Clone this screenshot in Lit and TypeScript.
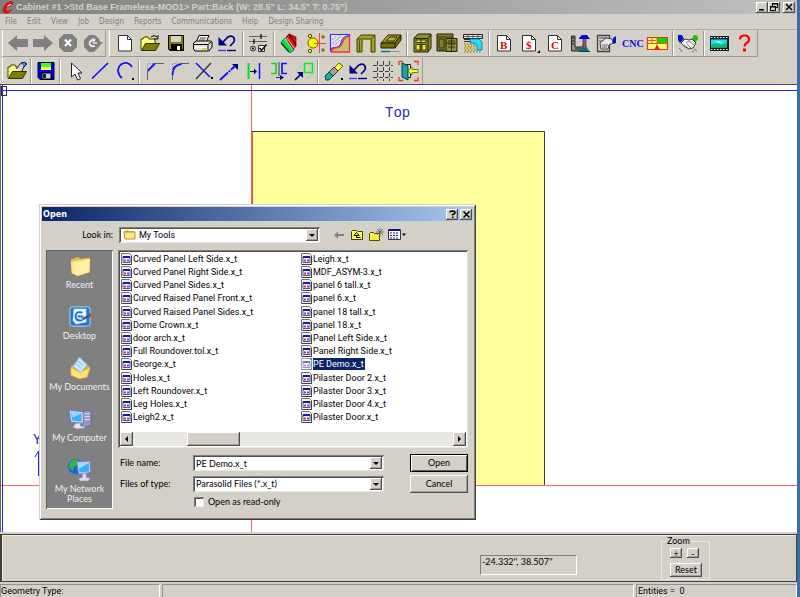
import { LitElement, html, css, svg, nothing } from "lit";
import { customElement, property } from "lit/decorators.js";
import { classMap } from "lit/directives/class-map.js";

const undo = svg`<path d="M6 13l7-7q4-2 6 1 1 3-1 5l-3 3" fill="none" stroke="#000080" stroke-width="1.700"/><path d="M3.500 6v8.500H12z" fill="#000080"/><path d="M3 19.500h8" stroke="#4040ff" stroke-width="1.400"/><path d="M12 19.500h9" stroke="#000080" stroke-width="1.400"/>`;

const openFolder = svg`<path d="M3 19V8h2l1-2h4l1 2h6v4" fill="#ffff80" stroke="#404000"/><path d="M3.500 19.500l4-7h14l-4 7z" fill="#808000" stroke="#303000"/>`;

const page = svg`<path d="M5.500 4.500h9l4 4v11.500h-13z" fill="#fff" stroke="#303030"/><path d="M14.500 4.500v4h4" fill="none" stroke="#303030"/>`;

const icons: Record<string, unknown> = {
  back: svg`<path d="M2 12l9-8v4h11v8H11v4z" fill="#808080"/>`,
  forward: svg`<path d="M22 12l-9-8v4H2v8h11v4z" fill="#808080"/>`,
  stop: svg`<path d="M8 3h8l5 5v8l-5 5H8l-5-5V8z" fill="#808080"/><path d="M9 8.500l6 6.500M15 8.500L9 15" stroke="#fff" stroke-width="2"/>`,
  refresh: svg`<path d="M8 4h6l4 4 1 3h3l-5 6-4 4H8l-5-5V9z" fill="#808080"/><path d="M14 15q-4 1-5.500-2 0-3.500 3.500-4" fill="none" stroke="#e8e8e8" stroke-width="1.800"/><path d="M11.500 6.500L15 9l-3.500 2.500z" fill="#e8e8e8"/><path d="M12 12h4" stroke="#e8e8e8" stroke-width="1.500"/>`,
  new: page,
  open: svg`${openFolder}<path d="M13 6q3-3 6 0M20 4v4h-4" fill="none" stroke="#000"/>`,
  save: svg`<path d="M4 4h16v16H6l-2-2z" fill="#000"/><path d="M5 5h2v6h10V5h2v13h-1v-5H7v5H5z" fill="#808000"/><path d="M7 5h10v6H7z" fill="#d4d0c8"/><path d="M13 15h3v4h-3z" fill="#fff"/>`,
  print: svg`<path d="M9 4.500h10l-3 7H6z" fill="#fff" stroke="#000"/><path d="M10 7h6M9 9h6" stroke="#404040"/><path d="M3.500 12l3-2h14l1.500 1v5l-3 4h-14l-1.500-2z" fill="#e4e2dc" stroke="#000"/><path d="M4 13.500h14l3-2.500M18 14v5" fill="none" stroke="#000"/><path d="M5 16.500h12" stroke="#fff"/><path d="M12 17h4v1.500h-4z" fill="#d0d000"/>`,
  undo,
  settings: svg`<path d="M3 5.500h18M3 10.500h18" stroke="#606060"/><path d="M15 3v5M8 8v5" stroke="#303030" stroke-width="1.600"/><circle cx="7" cy="17.500" r="2.500" fill="none" stroke="#303030"/><circle cx="7" cy="17.500" r="1"/><path d="M12.500 14.500h6v6h-6z" fill="#fff" stroke="#303030"/><path d="M13.500 17l2 2.500 5-6" fill="none" stroke="#000" stroke-width="1.400"/>`,
  books: svg`<path d="M4 11l4-4 9 12-4 3z" fill="#00e040" stroke="#007020" stroke-width=".7"/><path d="M9 6l3-3 7 3v9l-3 4z" fill="#e81010" stroke="#600" stroke-width=".7"/><path d="M8 8l8 11M10 7l7 10" stroke="#f4f4f4" stroke-width=".8"/><path d="M12 3l7 11" stroke="#600000" stroke-width="1.400"/><path d="M4 12l8 9" stroke="#104010" stroke-width="1.200"/>`,
  drill: svg`<path d="M17.500 2v20M6 12.500h18" stroke="#ff4040"/><circle cx="11" cy="12" r="5" fill="#ff0" stroke="#706000"/><path d="M12 12.500h4" stroke="#ff4040"/><g fill="#ff0" stroke="#504000"><circle cx="8" cy="5" r="1.700"/><circle cx="8" cy="20" r="1.700"/><circle cx="21" cy="6" r="1.200"/><circle cx="21" cy="19" r="1.200"/></g>`,
  profile: svg`<path d="M2.500 3.500h19v1q-7 1-8 6-1 6-7 6-4 0-4 4z" fill="#e4e4ea" stroke="#3030ff" stroke-width="1.200"/><path d="M4 9l4-4M4 13l9-8M6 15l6-6" stroke="#909090" stroke-width=".8"/><path d="M21.500 5q-6 2-7 7-2 5-7 5-4 1-4 4h18z" fill="#c8c070" stroke="#ff3030" stroke-width="1.300"/>`,
  door: svg`<path d="M3 8l4-4h14v17h-4V10H8v11H3z" fill="#a0a030" stroke="#404000"/><path d="M9.500 21V9h7v12" fill="#d4d0c8" stroke="#d8d860"/><path d="M3 8h14v13M5.500 9.500V21M17 8l4-4" fill="none" stroke="#404000" stroke-width=".8"/>`,
  panel: svg`<path d="M2 12l7-8h13l-6 8z" fill="#a0a030" stroke="#202000"/><path d="M7 10l4-4h7l-3 4z" fill="#b8b040" stroke="#303000"/><path d="M2 12h14l6-8v5l-6 8H2z" fill="#707010" stroke="#202000"/><path d="M16 12v5" stroke="#202000"/><path d="M2 20.500h9" stroke="#008080" stroke-width="1.500"/><path d="M11 20.500h10" stroke="#80a0a0"/>`,
  cabinet: svg`<path d="M4 7l4-4h13v14l-3 4H4z" fill="#909030" stroke="#202000"/><path d="M4.500 7.500h13.500v13M18 7.500l3-4" fill="none" stroke="#202000"/><path d="M6 9h10v2.500H6zM6 13.500h4V19H6zM12 13.500h4V19h-4z" fill="#e8e830" stroke="#404000"/><path d="M11 8v12" stroke="#303000"/>`,
  cabinets: svg`<path d="M2 3h16v17H2z" fill="#808030" stroke="#202000"/><path d="M2 6h16M4 8h5v9H4zM4 19h6" fill="none" stroke="#202000" stroke-width=".8"/><path d="M11 7.500h11v13H11z" fill="#909038" stroke="#202000"/><path d="M13 10h7M13 13h7M13 16h7M16.500 8v12M11 12h11" stroke="#303000"/>`,
  countertop: svg`<path d="M3 12h11v9H3z" fill="#d4d0a0"/><path d="M3 13h11M4 15h11M3 17h11M4 19h16M3 21h17" stroke="#807000" stroke-dasharray="1.500 1.500" stroke-width="1.200"/><path d="M2.500 3.500h19v4h-19z" fill="#e8e8e8" stroke="#202020"/><path d="M7 3v4M12 3v4M17 3v4M3 5.500h18" stroke="#404040" stroke-width=".8"/><path d="M9 8h9l3 3v8h-5v-5l-3-2H9z" fill="#20e0f4" stroke="#0070b0" stroke-width=".8"/><path d="M3 8.500h6M3 10.500h6" stroke="#303030"/>`,
  bill: svg`${page}<text x="8" y="17.500" class="mark">B</text>`,
  cost: svg`${page}<text x="9" y="17.500" class="mark">$</text><path d="M23 19v3h-3z"/>`,
  cut: svg`${page}<text x="8" y="17.500" class="mark">C</text>`,
  saw: svg`<path d="M3.500 5h3.500v11h6v4H3.500z" fill="#909090" stroke="#202020"/><path d="M4 7h2M4 10h2M4 13h2M7 18h5" stroke="#202020"/><path d="M11 20l5-9 5 9z" fill="#008080"/><path d="M15 7h3v11h-3z" fill="#a05060" stroke="#402020" stroke-width=".6"/><path d="M11 7l3-3h5l3 4H11z" fill="#0000e0"/><path d="M11 20.500h11" stroke="#004040"/>`,
  report: svg`<path d="M3.500 4.500h12v16h-12z" fill="#d0d0d0" stroke="#404040" stroke-width="1.300"/><path d="M5 7h8M5 10h4" stroke="#505050"/><path d="M6 12l6-5 6 1 1 4-4 2-1 4H7z" fill="#e8e8e8" stroke="#404040"/><path d="M8 14h6M8 16h5" stroke="#606060"/><path d="M19 7l3-2v7l-3 1z" fill="#0010d0"/>`,
  cnc: svg`<text x="2" y="16" class="cnc">CNC</text>`,
  nesting: svg`<path d="M2.500 6.500h20v12h-20z" fill="#ffff70" stroke="#f03010" stroke-width="1.200"/><path d="M12 7h10v5H12z" fill="#00e000"/><path d="M7 7v5M2 12.500h20M12 7v11M3 9.500h8" stroke="#f05030"/><path d="M12 14l3 4.500H9z" fill="#e02010"/>`,
  hands: svg`<path d="M2 4h4l2 4-4 4-2-3z" fill="#0010c0"/><path d="M22 4h-4l-2 4 3 4 3-4z" fill="#10c010"/><path d="M19 4l3-1v3z" fill="#e0d000"/><path d="M5 12l4-4 4 1 3-1 4 4-3 5-4 1-5-3z" fill="#f4f4f4" stroke="#404040"/><path d="M10 12l3-2 5 4M8 14l4 3M11 13l4 4" fill="none" stroke="#606060" stroke-width=".8"/><path d="M3 17l2 2M6 19l-1 2M18 18l3 2M16 20l2 1" stroke="#707070"/>`,
  film: svg`<path d="M3 5h19v15H3z" fill="#102020"/><path d="M4 6.500h17M4 18.500h17" stroke="#f0f0f0" stroke-dasharray="1.500 1.500"/><path d="M4 8.500h16v8H4z" fill="#10e8f8"/><path d="M4 14q4-3 7-1t9-2v5.500H4z" fill="#20b070"/><path d="M8 11l4-1 3 2z" fill="#fff"/>`,
  help: svg`<path d="M8 8.500q0-4 4.500-4t4.500 4q0 2.500-2.500 3.500-2 1-2 3.500" fill="none" stroke="#ff0000" stroke-width="2.200"/><path d="M11 17.500h3v3h-3z" fill="#f00"/>`,

  openPart: svg`${openFolder}<path d="M11 10l5-6 4 1-3 7" fill="#d0d0d0" stroke="#202020"/><path d="M16 4q4-2 6 1l-3 3" fill="#4080ff" stroke="#001050"/>`,
  savePart: svg`<path d="M4 3.500h16v17H6l-2-2z" fill="#0000e0" stroke="#000030"/><path d="M7 4h10v4H7z" fill="#40ff20"/><path d="M7 8h10v3H7z" fill="#ffff40"/><path d="M8 14h9v6H8z" fill="#d0d0d0" stroke="#000"/><path d="M9 15h3v4H9z" fill="#202020"/>`,
  select: svg`<path d="M8.500 4v14l3.500-3 2.500 6 3-1.200-2.500-5.800h4z" fill="#fff" stroke="#202020"/>`,
  line: svg`<path d="M4 19.500L20 4" stroke="#1010ff" stroke-width="1.700"/>`,
  arc: svg`<path d="M19 8q-3-5-8-4-6 2-6 8 1 5 4 7" fill="none" stroke="#1010ff" stroke-width="1.700"/><path d="M19 19h2v2h-2z"/>`,
  chamfer: svg`<path d="M5.500 21V12M12 4.500h10" stroke="#606060"/><path d="M5.500 12L13 4.500" stroke="#1010ff" stroke-width="1.800"/><path d="M5.500 12V4.500H12" fill="none" stroke="#909090" stroke-dasharray="1 1"/>`,
  fillet: svg`<path d="M5.500 21v-5M14 4.500h8" stroke="#606060"/><path d="M5.500 16q0-10 9-11" fill="none" stroke="#1010ff" stroke-width="1.800"/><path d="M5.500 12V4.500H12" fill="none" stroke="#909090" stroke-dasharray="1 1"/>`,
  trim: svg`<path d="M4 4l14 14" stroke="#1010ff" stroke-width="1.500"/><path d="M4 20L19 4" stroke="#303030" stroke-width="1.200"/><path d="M19 18h2v2h-2z"/>`,
  extend: svg`<path d="M3 21L19 6" stroke="#1010ff" stroke-width="1.800" stroke-dasharray="11 1 2 1"/><path d="M15 5h6v6z" fill="#000080"/>`,
  offset: svg`<path d="M6.500 4v16" stroke="#00e020" stroke-width="2"/><path d="M17.500 4v16" stroke="#1010ff" stroke-width="1.500"/><path d="M8 12.500h5" stroke="#000080"/><path d="M12 9.500l3 3-3 3z" fill="#000080"/>`,
  mirror: svg`<path d="M4 4.500h5v10H4" fill="none" stroke="#00e020" stroke-width="1.700"/><path d="M20 4.500h-5v10h5" fill="none" stroke="#1010ff" stroke-width="1.700"/><path d="M12 3v14M9 18.500h5" stroke="#303050"/><path d="M13 16l4 2.500-4 2.500z" fill="#000080"/>`,
  move: svg`<path d="M12.500 4.500h8v9h-8z" fill="none" stroke="#00f020" stroke-width="1.600"/><path d="M3 21l6-6" stroke="#000080" stroke-width="1.700"/><path d="M5 13h6v6z" fill="#000080"/><path d="M4 12l7-7M14 20l7-5" stroke="#a0a0a0" stroke-dasharray="1 1"/>`,
  erase: svg`<path d="M13 9l5-5 4 3-6 6z" fill="#ffff20" stroke="#606000"/><path d="M8 13l5-5 4 4-5 5z" fill="#a0a0a0" stroke="#303030"/><path d="M4 17l4-4 4 4-4 4H5z" fill="#10b0a0" stroke="#104040"/><path d="M20 19h2v2h-2z"/>`,
  undoEdit: undo,
  grid: svg`<path d="M2 6.500h20M2 12.500h20M2 18.500h20M6.500 2v20M12.500 2v20M18.500 2v20" stroke="#303030" stroke-width=".9" stroke-dasharray="4 2"/>`,
  exit: svg`<path d="M3 6V2.500h4M18 2.500h4V6M3 18v3.500h4M18 21.500h4V18" fill="none" stroke="#ff3030" stroke-width="1.300"/><path d="M9.500 5.500h5v13h-5z" fill="#f0f0f0" stroke="#202020"/><path d="M6 4l6 2.500V21l-6-3z" fill="#20a0a0" stroke="#004040"/><path d="M12 12l4-4v2.500h6v3h-6V16z" fill="#ffff20" stroke="#606000" stroke-width=".8"/>`,
};

const file = svg`<svg class="file-icon" viewBox="0 0 11 12" aria-hidden="true"><path d="M.5.5h8l2 2v9H.5z" fill="#f4f2ec" stroke="#707070"/><path d="M10.500 3v8.500H1" fill="none" stroke="#404040"/><path d="M2 3.500h7v6H2z" fill="#f4f4ff" stroke="#5050a0"/><path d="M2 3h7v2H2z" fill="#1818a0"/><path d="M3 6.500h2v2H3z" fill="#e03030"/><path d="M6 6.500h2v2H6z" fill="#3060ff"/></svg>`;

const places = [
  { name: "Recent", art: svg`<path d="M3 6l7-3 3 2 9-1 1 3v12l-13 4-6-3z" fill="#e8bc48"/><path d="M3 8l20-3-1 14-12 4-6-3z" fill="#ffe88c"/><path d="M6 10l16-3-1 11-12 4z" fill="#fff0a8"/>` },
  { name: "Desktop", art: svg`<rect x="2" y="2" width="21" height="20" rx="3" fill="#1c78d8" stroke="#b0d8ff"/><path d="M6 4h13v14l-11 2-3-4z" fill="#e8f6ff"/><path d="M15 8q-6-2-7 3-1 6 7 5M16 12h-6" fill="none" stroke="#1c70d0" stroke-width="2"/><path d="M14 14l9-5 1 2-8 5z" fill="#405880"/><path d="M22 8l2 1v4l-2-1z" fill="#c04020"/>` },
  { name: "My Documents", art: svg`<path d="M3 11l4-3 14 2 2 3-4 10-14-3z" fill="#e8b840"/><path d="M12 1l8 8-6 9-9-7z" fill="#c8e8ff" stroke="#70a8d0"/><path d="M8 8l6 5M10 5l6 5" stroke="#80b8e0"/><path d="M3 12l10 5 10-5-3 10-8 2-9-4z" fill="#ffe070" stroke="#d8a830" stroke-width=".6"/>` },
  { name: "My Computer", art: svg`<path d="M14 5l8-2 2 3v13l-6 2-4-3z" fill="#9898c8" stroke="#686898"/><path d="M17 7h6M17 10h6M17 13h6" stroke="#e0e0f8"/><path d="M1 3l15 2v12L3 16z" fill="#c8d0f0" stroke="#7078b0"/><path d="M3 5l11 1.500v8.500L4.500 14z" fill="#38b0f8"/><path d="M3 5l11 1.500L5 11z" fill="#90dcff"/><path d="M8 17h5v3h4v2l-7 1-5-2z" fill="#e0e0f4" stroke="#9090b8" stroke-width=".6"/>` },
  { name: "My Network Places", art: svg`<circle cx="8" cy="9" r="8" fill="#1868d8"/><path d="M2 5q5-6 10-2l-2 4-4 2-1 5-4-4z" fill="#30b840"/><path d="M9 4l14-1 1 12-13 2z" fill="#c8d0f0" stroke="#7078b0"/><path d="M11 6l11-1v9l-10 1z" fill="#38b0f8"/><path d="M11 6l11-1-10 6z" fill="#98e0ff"/><path d="M15 16h4v4l4 1-2 3h-8l-2-2 4-2z" fill="#d8d8f4" stroke="#9090b8" stroke-width=".6"/>` },
];

const files = [
  "Curved Panel Left Side.x_t", "Curved Panel Right Side.x_t", "Curved Panel Sides.x_t",
  "Curved Raised Panel Front.x_t", "Curved Raised Panel Sides.x_t", "Dome Crown.x_t",
  "door arch.x_t", "Full Roundover.tol.x_t", "George.x_t", "Holes.x_t",
  "Left Roundover.x_t", "Leg Holes.x_t", "Leigh2.x_t",
  "Leigh.x_t", "MDF_ASYM-3.x_t", "panel 6 tall.x_t", "panel 6.x_t", "panel 18 tall.x_t",
  "panel 18.x_t", "Panel Left Side.x_t", "Panel Right Side.x_t", "PE Demo.x_t",
  "Pilaster Door 2.x_t", "Pilaster Door 3.x_t", "Pilaster Door 4.x_t", "Pilaster Door.x_t",
];

const shared = css`
  * { box-sizing: border-box; }
  button, input, select {
    font: inherit;
    color: inherit;
    margin: 0;
    padding: 0;
    border: 0;
    border-radius: 0;
    background: none;
    appearance: none;
    outline: none;
  }
  .raised {
    background: #d4d0c8;
    box-shadow: inset -1px -1px #505050, inset 1px 1px #fff, inset -2px -2px #a0a0a0;
  }
  .sunken {
    background: #fff;
    box-shadow: inset 1px 1px #808080, inset -1px -1px #e8e6e0, inset 2px 2px #505050;
  }
`;

@customElement("tool-strip")
class ToolStrip extends LitElement {
  @property({ attribute: false }) groups: string[][] = [];
  @property({ type: Number }) pitch = 25;

  static styles = [shared, css`
    :host { display: flex; align-items: center; height: 27px; }
    .group { display: flex; justify-content: space-around; flex: none; }
    .tool { width: 24px; height: 24px; }
    .tool svg { display: block; width: 24px; height: 24px; overflow: visible; }
    .sep { width: 2px; height: 25px; margin: 0 1px; border-left: 1px solid #9c9a94; border-right: 1px solid #fff; }
    :host(.wide) .sep { margin: 0 1px 0 2px; }
    .mark { font: bold 11px "Liberation Serif", serif; fill: #e00000; }
    .cnc { font: bold 10px "Liberation Serif", serif; fill: #1010e0; }
  `];

  render() {
    return this.groups.map((group, i) => html`
      ${i ? html`<span class="sep"></span>` : nothing}
      <div class="group" style="width:${Math.round(group.length * this.pitch)}px">
        ${group.map((name) => html`
          <button class="tool" aria-label=${name}><svg viewBox="0 0 24 24">${icons[name]}</svg></button>`)}
      </div>`);
  }
}

@customElement("open-dialog")
class OpenDialog extends LitElement {
  static styles = [shared, css`
    :host {
      display: block;
      padding: 3px;
      background: #d4d0c8;
      box-shadow: inset 1px 1px #d4d0c8, inset -1px -1px #404040, inset 2px 2px #fff, inset -2px -2px #808080;
      font: 9px/12px Lato, "Liberation Sans", sans-serif;
      color: #000;
    }
    .title {
      display: flex;
      align-items: center;
      gap: 2px;
      height: 14px;
      padding: 0 1px;
      background: linear-gradient(90deg, #0a246a, #a6caf0);
      color: #fff;
      font: bold 9px/14px "DejaVu Sans Condensed", "DejaVu Sans", sans-serif;
    }
    .title h2 { flex: 1; margin: 0; font: inherit; }
    .title button { display: grid; place-items: center; width: 12px; height: 11px; color: #000; }
    .content { display: grid; grid-template-columns: 67px minmax(0, 1fr); gap: 7px 5px; padding: 6px 5px 8px 4px; }
    .look-label { text-align: right; line-height: 16px; }
    .look { display: flex; align-items: center; gap: 11px; padding-left: 1px; }
    .combo { position: relative; display: flex; height: 16px; }
    .look .combo { width: 201px; }
    .combo select, .combo input { width: 100%; height: 16px; padding: 0 16px 0 3px; }
    .look select { padding-left: 20px; font: 9px/12px Roboto, "Liberation Sans", sans-serif; }
    .folder { position: absolute; left: 4px; top: 2px; width: 13px; height: 12px; }
    .drop {
      position: absolute;
      right: 2px;
      top: 2px;
      width: 12px;
      height: 12px;
      display: grid;
      place-items: center;
      pointer-events: none;
    }
    .drop::before { content: ""; border: 3px solid transparent; border-top-color: #000; border-bottom: 0; }
    .nav { display: flex; gap: 4px; }
    .nav svg { display: block; width: 15px; height: 14px; overflow: visible; }
    .places {
      display: flex;
      flex-direction: column;
      padding: 2px 1px;
      background: #808080;
      box-shadow: inset 1px 1px #606060, inset -1px -1px #fff;
      color: #f0f0f0;
    }
    .place { display: flex; flex-direction: column; align-items: center; gap: 2px; height: 51px; padding: 2px 2px 0; line-height: 10px; }
    .place svg { display: block; width: 24px; height: 24px; flex: none; }
    .list { display: flex; flex-direction: column; height: 198px; padding: 2px; }
    .files {
      flex: 1;
      display: grid;
      grid-auto-flow: column;
      grid-template-rows: repeat(13, 1fr);
      grid-auto-columns: 180px;
      justify-items: start;
      overflow: hidden;
      padding-bottom: 8px;
      font: 9px/12px Roboto, "Liberation Sans", sans-serif;
    }
    .file { display: flex; align-items: center; }
    .file-icon { width: 11px; height: 12px; margin: 0 1px; }
    .file span { padding: 0 1px 0 0; white-space: nowrap; }
    .file.chosen span { background: #0a246a; color: #fff; }
    .file.chosen .file-icon { opacity: .6; background: #0a246a; }
    .scroll { display: flex; height: 14px; background: #e9e7e3; }
    .scroll button { width: 13px; display: grid; place-items: center; }
    .scroll button::before { content: ""; border: 3px solid transparent; }
    .scroll .left::before { border-right-color: #000; border-left: 0; }
    .scroll .right::before { border-left-color: #000; border-right: 0; }
    .track { flex: 1; padding-left: 54px; }
    .thumb { width: 53px; height: 14px; }
    .form { display: grid; grid-template-columns: 73px 191px 1fr; gap: 3px 0; align-items: center; padding: 0 0 0 2px; }
    .form > button { height: 18px; width: 58px; justify-self: end; }
    .form .default { box-shadow: inset 0 0 0 1px #000, inset 2px 2px #fff, inset -2px -2px #606060; }
    .read { grid-column: 2; display: flex; align-items: center; gap: 4px; height: 12px; padding-left: 1px; }
    .read input { width: 10px; height: 10px; }
    .main { display: flex; flex-direction: column; gap: 6px; }
  `];

  render() {
    return html`
      <div class="title">
        <h2>Open</h2>
        <button class="raised" aria-label="Help"><svg width="7" height="8" viewBox="0 0 7 8"><path d="M1 2.500Q1 1 3.500 1T6 2.500Q6 4 3.500 4.500v1" fill="none" stroke="#000" stroke-width="1.500"/><path d="M3 6.500h1.500V8H3z"/></svg></button>
        <button class="raised" aria-label="Close"><svg width="7" height="7" viewBox="0 0 7 7"><path d="M.5.5l6 6M6.500.5l-6 6" stroke="#000" stroke-width="1.500"/></svg></button>
      </div>
      <div class="content">
        <label class="look-label" for="look">Look in:</label>
        <div class="look">
          <div class="combo">
            <select id="look" class="sunken"><option>My Tools</option></select>
            <svg class="folder" viewBox="0 0 13 12"><path d="M1 2l4-1 1 1h5v2H1z" fill="#e0a828"/><path d="M1 3h11v7H2z" fill="#ffe880" stroke="#b89030"/></svg>
            <span class="drop raised"></span>
          </div>
          <div class="nav">
            <button aria-label="Back"><svg viewBox="0 0 15 14"><path d="M3 7l4-3.500V6h6v2H7v2.500z" fill="#808080"/></svg></button>
            <button aria-label="Up one level"><svg viewBox="0 0 15 14"><path d="M1.500 11.500v-8l1-1h4l1 1h5v8z" fill="#ffff50" stroke="#404000"/><path d="M6.500 4.500L4 7.500h5zM6.500 7v2.500h4" fill="none" stroke="#000"/></svg></button>
            <button aria-label="New folder"><svg viewBox="0 0 15 14"><path d="M.5 12.500v-7l1-1h3l1 1h5v7z" fill="#f8f040" stroke="#505000"/><path d="M11 0v8M7 4h8M8 1l6 6M14 1L8 7" stroke="#505050" stroke-width=".7"/></svg></button>
            <button aria-label="View"><svg viewBox="0 0 15 14"><path d="M.5 1.500h12v10H.5z" fill="#fff" stroke="#303050"/><path d="M1 1h11v2H1z" fill="#101080"/><path d="M2 5h9M2 7.500h9M2 10h9" stroke="#202060" stroke-dasharray="2 1"/><path d="M14 5.500h4l-2 2.500z"/></svg></button>
          </div>
        </div>
        <nav class="places">
          ${places.map((p) => html`<button class="place"><svg viewBox="0 0 25 25">${p.art}</svg><span>${p.name.startsWith("My Network") ? html`My Network<br>Places` : p.name}</span></button>`)}
        </nav>
        <div class="main">
          <div class="list sunken">
            <div class="files">
              ${files.map((name) => html`
                <button class=${classMap({ file: true, chosen: name === "PE Demo.x_t" })}>${file}<span>${name}</span></button>`)}
            </div>
            <div class="scroll">
              <button class="left raised" aria-label="Scroll left"></button>
              <div class="track"><div class="thumb raised"></div></div>
              <button class="right raised" aria-label="Scroll right"></button>
            </div>
          </div>
          <div class="form">
            <label for="name">File name:</label>
            <div class="combo"><input id="name" class="sunken" type="text" value="PE Demo.x_t"><span class="drop raised"></span></div>
            <button class="raised default">Open</button>
            <label for="type">Files of type:</label>
            <div class="combo"><select id="type" class="sunken"><option>Parasolid Files (*.x_t)</option></select><span class="drop raised"></span></div>
            <button class="raised">Cancel</button>
            <label class="read"><input class="sunken" type="checkbox">Open as read-only</label>
          </div>
        </div>
      </div>`;
  }
}

@customElement("app-root")
class AppRoot extends LitElement {
  static styles = [shared, css`
    :host {
      display: flex;
      flex-direction: column;
      min-height: 100vh;
      box-sizing: border-box;
      border-right: 3px solid #3a6ea5;
      background: #d4d0c8;
      color: #000;
      font: 9px/12px Roboto, "Liberation Sans", sans-serif;
      overflow: hidden;
    }
    .title {
      display: flex;
      align-items: center;
      height: 14px;
      padding: 0 2px;
      background: linear-gradient(90deg, #808080, #c0c0c0);
      color: #d4d0c8;
    }
    .title h1 { flex: 1; margin: 0 0 0 2px; font: bold 9px/14px "Liberation Sans", sans-serif; white-space: nowrap; }
    .title button { width: 12px; height: 11px; display: grid; place-items: center; color: #000; }
    .title .close { margin-left: 3px; }
    .menu { display: flex; gap: 10px; height: 16px; padding: 0 5px; border-bottom: 1px solid #b0b0a8; color: #808080; font-family: "DejaVu Sans Condensed", "DejaVu Sans", sans-serif; font-size: 8px; }
    .bars { display: flex; gap: 3px; height: 28px; padding-left: 2px; }
    tool-strip { padding-left: 2px; border-right: 1px solid #9c9a94; border-left: 1px solid #fff; border-bottom: 1px solid #9c9a94; }
    .edit { height: 26px; }
    .edit tool-strip { padding-left: 1px; padding-right: 2px; height: 26px; border-bottom: 0; }
    .canvas { position: relative; flex: 1; min-height: 448px; border-top: 1px solid #505050; border-left: 1px solid #606060; background: #fff; overflow: hidden; }
    .drawing { position: absolute; inset: 0; width: 100%; height: 100%; }
    .drawing text { font: 14px "Liberation Mono", monospace; fill: #2828c8; }
    open-dialog { position: absolute; left: 38px; top: 119px; width: 437px; }
    .panel { display: flex; height: 48px; margin-top: 2px; border: 1px solid #404040; border-left-width: 2px; box-shadow: inset 1px 1px #f0eee8; }
    .coords {
      width: 97px;
      height: 20px;
      margin: 20px 84px 0 auto;
      padding: 0 1px;
      border: 1px solid;
      border-color: #808080 #fff #fff #808080;
    }
    .ms { font-family: Lato, "Liberation Sans", sans-serif; }
    .zoom {
      display: grid;
      grid-template-columns: 12px 12px;
      gap: 5px;
      align-content: start;
      width: 49px;
      height: 44px;
      margin: 1px 86px 0 0;
      padding: 2px 8px 0;
      border: 1px groove #e8e8e8;
    }
    .zoom legend { padding: 0 1px; margin-left: -4px; line-height: 10px; }
    .zoom button { height: 10px; line-height: 9px; }
    .zoom .reset { grid-column: 1 / -1; width: 32px; height: 14px; line-height: 12px; }
    .status { display: grid; grid-template-columns: 160px 1fr 161px; gap: 2px; height: 15px; padding-top: 2px; }
    .status span { padding-left: 1px; border-top: 1px solid #909090; border-left: 1px solid #909090; border-right: 1px solid #fff; }
    .status span:first-child { padding-left: 0; }
  `];

  render() {
    return html`
      <header class="title">
        <svg width="12" height="14" viewBox="0 0 12 14"><path d="M10 1Q5 1 2 6t0 7q4 2 8-3l-1-1q-3 3-5 1 0-2 5-4 4-3 1-5z" fill="#e01010"/><path d="M5 7q1-3 4-3 1 1-4 3z" fill="#fff"/></svg>
        <h1>Cabinet #1 &gt;Std Base Frameless-MOD1&gt; Part:Back (W: 28.5" L: 34.5" T: 0.75")</h1>
        <button class="raised" aria-label="Minimize"><svg width="8" height="8"><path d="M1 6h5v1.500H1z"/></svg></button>
        <button class="raised" aria-label="Restore"><svg width="8" height="8"><path d="M2.500 3V.5h5v4H6M.5 3.500h5v4h-5z" fill="none" stroke="#000"/><path d="M2 0h6v1.500H2zM0 3h6v1.500H0z"/></svg></button>
        <button class="raised close" aria-label="Close"><svg width="8" height="8"><path d="M1 1l6 6M7 1L1 7" stroke="#000" stroke-width="1.500"/></svg></button>
      </header>
      <nav class="menu">
        ${["File", "Edit", "View", "Job", "Design", "Reports", "Communications", "Help", "Design Sharing"].map((m) => html`<button>${m}</button>`)}
      </nav>
      <div class="bars">
        <tool-strip .groups=${[["back", "forward", "stop", "refresh"]]} .pitch=${25}></tool-strip>
        <tool-strip class="wide" .pitch=${25.5} .groups=${[
          ["new", "open", "save", "print", "undo"],
          ["settings"],
          ["books", "drill", "profile", "door", "panel"],
          ["cabinet", "cabinets", "countertop"],
          ["bill", "cost", "cut", "saw", "report", "cnc", "nesting"],
          ["hands"],
          ["film", "help"],
        ]}></tool-strip>
      </div>
      <div class="bars edit">
        <tool-strip .groups=${[
          ["openPart"],
          ["savePart"],
          ["select", "line", "arc"],
          ["chamfer", "fillet", "trim", "extend", "offset", "mirror", "move"],
          ["erase", "undoEdit", "grid", "exit"],
        ]}></tool-strip>
      </div>
      <main class="canvas">
        <svg class="drawing">
          <rect x="251.500" y="46.500" width="292" height="354" fill="#ffff9c" stroke="#404020"/>
          <path d="M250.500 0v2000M0 400.500h4000" fill="none" stroke="#ff6060"/>
          <path d="M251.500 47v353" stroke="#c06040"/>
          <path d="M0 5.500h4000M1.500 0v2000" fill="none" stroke="#2020ff"/>
          <rect x=".5" y="1.500" width="5" height="9" fill="none" stroke="#303030"/>
          <text x="384" y="32">Top</text>
          <text x="32" y="359">Y</text>
          <path d="M37.500 391v-24M34 372l3.500-6 3.500 6" fill="none" stroke="#2020ff"/>
        </svg>
        <open-dialog role="dialog" aria-label="Open"></open-dialog>
      </main>
      <section class="panel ms">
        <output class="coords">-24.332'', 38.507''</output>
        <fieldset class="zoom">
          <legend>Zoom</legend>
          <button class="raised">+</button>
          <button class="raised">-</button>
          <button class="raised reset">Reset</button>
        </fieldset>
      </section>
      <footer class="status">
        <span>Geometry Type:</span><span></span><span>Entities =&nbsp; 0</span>
      </footer>`;
  }
}
